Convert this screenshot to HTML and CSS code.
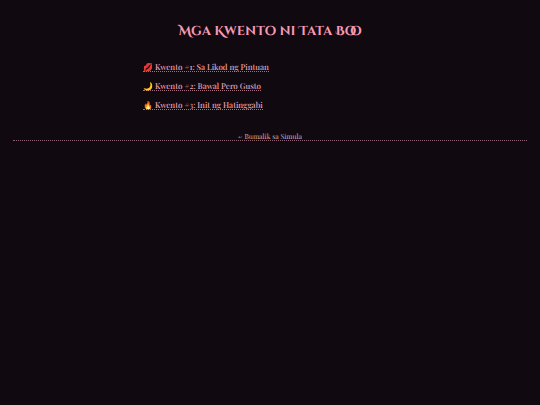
FILE: index.html
```html
<!DOCTYPE html>
<html lang="tl">
<head>
<meta charset="utf-8">
<meta name="viewport" content="width=device-width, initial-scale=1">
<title>Mga Kwento ni Tata Boo</title>
<link rel="stylesheet" href="styles.css">
</head>
<body>
<h1>Mga Kwento ni Tata Boo</h1>
<ul class="stories">
<li><a href="#kwento-1">💋 Kwento #1: Sa Likod ng Pintuan</a></li>
<li><a href="#kwento-2">🌙 Kwento #2: Bawal Pero Gusto</a></li>
<li><a href="#kwento-3">🔥 Kwento #3: Init ng Hatinggabi</a></li>
</ul>
<a class="back" href="#simula">← Bumalik sa Simula</a>
</body>
</html>
```
FILE: styles.css
```css
body {
  margin: 0;
  padding: 21px 13px;
  background: #10090f;
  color: #f79ab5;
  font-family: "Playfair Display", "Liberation Serif", serif;
  text-rendering: geometricPrecision;
}

h1 {
  margin: 0 0 21px;
  font-family: "Cinzel Decorative", "Liberation Serif", serif;
  font-size: 13px;
  line-height: 20px;
  font-weight: 700;
  text-align: center;
}

.stories {
  display: grid;
  justify-items: start;
  gap: 9px;
  max-width: 254px;
  margin: 0 auto;
  padding: 0;
  list-style: none;
  font-size: 8px;
  font-weight: 500;
  line-height: 12px;
}

a {
  display: block;
  height: 9px;
  text-decoration: none;
}

.stories a {
  color: #efa6b9;
  border-bottom: 1px dotted #a36f7f;
}

.back {
  margin-top: 21px;
  color: #c8b5be;
  border-bottom: 1px dotted #8d6371;
  font-size: 7px;
  line-height: 10px;
  text-align: center;
}
```
